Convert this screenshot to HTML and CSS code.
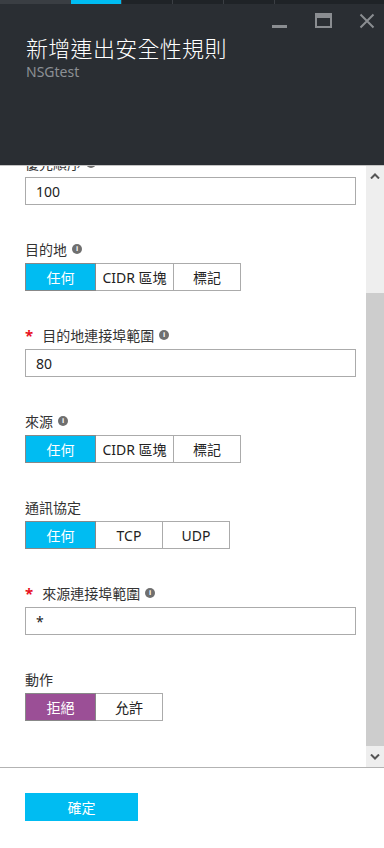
FILE: index.html
```html
<!DOCTYPE html>
<html lang="zh-Hant">
<head>
    <meta charset="UTF-8">
    <meta name="viewport" content="width=device-width, initial-scale=1.0">
    <title>新增連出安全性規則</title>
    <link rel="stylesheet" href="styles.css">
</head>
<body>
    <div class="blade">
        <header class="blade-header">
            <div class="tabs">
                <span class="tab tab-light"></span>
                <span class="tab tab-active"></span>
                <span class="tab"></span>
                <span class="tab"></span>
                <span class="tab"></span>
                <span class="tab tab-last"></span>
            </div>
            <div class="header-body">
                <div class="window-controls">
                    <svg class="ctrl" width="16" height="16" viewBox="0 0 16 16"><rect x="0" y="12" width="15" height="3" fill="#8a8d91"/></svg>
                    <svg class="ctrl" width="17" height="16" viewBox="0 0 17 16"><rect x="1" y="1" width="15" height="13" fill="none" stroke="#8a8d91" stroke-width="2"/><rect x="1" y="1" width="15" height="4" fill="#8a8d91"/></svg>
                    <svg class="ctrl" width="16" height="16" viewBox="0 0 16 16"><path d="M1.5 1.5 L14.5 14.5 M14.5 1.5 L1.5 14.5" stroke="#8a8d91" stroke-width="2"/></svg>
                </div>
                <h1 class="blade-title">新增連出安全性規則</h1>
                <p class="blade-subtitle">NSGtest</p>
            </div>
        </header>

        <div class="blade-content">
            <div class="scroll-view">
                <form class="rule-form">
                    <div class="field">
                        <label class="field-label">優先順序 <span class="info">i</span></label>
                        <input class="text-input" type="text" value="100">
                    </div>

                    <div class="field">
                        <label class="field-label">目的地 <span class="info">i</span></label>
                        <div class="options">
                            <span class="option selected">任何</span>
                            <span class="option wide">CIDR 區塊</span>
                            <span class="option">標記</span>
                        </div>
                    </div>

                    <div class="field">
                        <label class="field-label"><span class="required">*</span>目的地連接埠範圍 <span class="info">i</span></label>
                        <input class="text-input" type="text" value="80">
                    </div>

                    <div class="field">
                        <label class="field-label">來源 <span class="info">i</span></label>
                        <div class="options">
                            <span class="option selected">任何</span>
                            <span class="option wide">CIDR 區塊</span>
                            <span class="option">標記</span>
                        </div>
                    </div>

                    <div class="field">
                        <label class="field-label">通訊協定</label>
                        <div class="options">
                            <span class="option selected">任何</span>
                            <span class="option">TCP</span>
                            <span class="option">UDP</span>
                        </div>
                    </div>

                    <div class="field">
                        <label class="field-label"><span class="required">*</span>來源連接埠範圍 <span class="info">i</span></label>
                        <input class="text-input" type="text" value="*">
                    </div>

                    <div class="field">
                        <label class="field-label">動作</label>
                        <div class="options">
                            <span class="option deny">拒絕</span>
                            <span class="option">允許</span>
                        </div>
                    </div>
                </form>
            </div>
            <div class="scrollbar">
                <div class="scroll-btn">
                    <svg width="10" height="6" viewBox="0 0 10 6"><path d="M1 5.5 L5 1.5 L9 5.5" fill="none" stroke="#555" stroke-width="2"/></svg>
                </div>
                <div class="scroll-track">
                    <div class="scroll-thumb"></div>
                </div>
                <div class="scroll-btn">
                    <svg width="10" height="6" viewBox="0 0 10 6"><path d="M1 0.5 L5 4.5 L9 0.5" fill="none" stroke="#555" stroke-width="2"/></svg>
                </div>
            </div>
        </div>

        <footer class="blade-footer">
            <button type="button" class="ok-button">確定</button>
        </footer>
    </div>
</body>
</html>
```

FILE: styles.css
```css
body {
    margin: 0;
    padding: 0;
    font-family: "Noto Sans", "Noto Sans CJK TC", sans-serif;
    background-color: #ffffff;
    color: #333333;
}
.blade {
    display: flex;
    flex-direction: column;
    width: 384px;
    height: 848px;
    overflow: hidden;
}
.blade-header {
    height: 165px;
    background-color: #2a2e33;
    border-bottom: 1px solid #c4c4c4;
    flex-shrink: 0;
}
.tabs {
    display: flex;
    height: 4px;
}
.tab {
    width: 50px;
    background-color: #1f2327;
    border-left: 1px solid #3b3f44;
}
.tab-light {
    width: 71px;
    border-left: none;
    background-color: #3a3e43;
}
.tab-active {
    border-left: none;
    background-color: #00bcf2;
}
.tab-last {
    flex: 1;
}
.header-body {
    padding: 9px 9px 0 26px;
}
.window-controls {
    display: flex;
    justify-content: flex-end;
    height: 16px;
}
.ctrl {
    display: block;
    margin-left: 27px;
}
.blade-title {
    margin: 5px 0 0;
    font-size: 22px;
    line-height: 28px;
    font-weight: 300;
    color: #ffffff;
    letter-spacing: 0.3px;
}
.blade-subtitle {
    margin: 1px 0 0;
    font-size: 14px;
    line-height: 18px;
    color: #8c9095;
}
.blade-content {
    display: flex;
    height: 601px;
    flex-shrink: 0;
}
.scroll-view {
    flex: 1;
    overflow: hidden;
    padding: 0 10px 0 25px;
}
.rule-form {
    margin-top: -13px;
}
.field {
    margin-bottom: 34px;
}
.field-label {
    display: flex;
    align-items: center;
    height: 20px;
    margin-bottom: 4px;
    font-size: 14px;
    color: #333333;
}
.required {
    color: #e81123;
    font-weight: bold;
    margin-right: 9px;
    font-size: 15px;
}
.info {
    display: inline-flex;
    align-items: center;
    justify-content: center;
    width: 10px;
    height: 10px;
    margin-left: 5px;
    border-radius: 50%;
    background-color: #6f6f6f;
    color: #ffffff;
    font-size: 8px;
    font-weight: bold;
    line-height: 1;
    font-family: "Liberation Sans", sans-serif;
}
.text-input {
    display: block;
    box-sizing: border-box;
    width: 331px;
    height: 28px;
    margin: 0;
    padding: 0 10px;
    border: 1px solid #ababab;
    background-color: #ffffff;
    color: #222222;
    font-family: "Noto Sans", sans-serif;
    font-size: 14px;
    outline: none;
}
.options {
    display: flex;
}
.option {
    display: flex;
    align-items: center;
    justify-content: center;
    box-sizing: border-box;
    min-width: 68px;
    height: 28px;
    padding: 0 5px;
    margin-left: -1px;
    border: 1px solid #ababab;
    font-size: 14px;
    color: #222222;
    background-color: #ffffff;
}
.option.wide {
    width: 79px;
}
.option:first-child {
    margin-left: 0;
    width: 71px;
}
.option.selected {
    background-color: #00bcf2;
    border-color: #888888;
    color: #ffffff;
    position: relative;
}
.option.deny {
    background-color: #9b4f96;
    border-color: #888888;
    color: #ffffff;
    position: relative;
}
.scrollbar {
    display: flex;
    flex-direction: column;
    width: 18px;
    background-color: #eeeeee;
}
.scroll-btn {
    display: flex;
    align-items: center;
    justify-content: center;
    height: 20px;
}
.scroll-btn:last-child {
    height: 21px;
}
.scroll-track {
    flex: 1;
}
.scroll-thumb {
    margin-top: 107px;
    height: 453px;
    background-color: #cdcdcd;
}
.blade-footer {
    flex: 1;
    border-top: 1px solid #b3b3b3;
    padding: 25px;
}
.ok-button {
    display: block;
    width: 113px;
    height: 28px;
    padding: 0;
    border: none;
    background-color: #00bcf2;
    color: #ffffff;
    font-family: "Noto Sans", "Noto Sans CJK TC", sans-serif;
    font-size: 14px;
    cursor: pointer;
}
```
